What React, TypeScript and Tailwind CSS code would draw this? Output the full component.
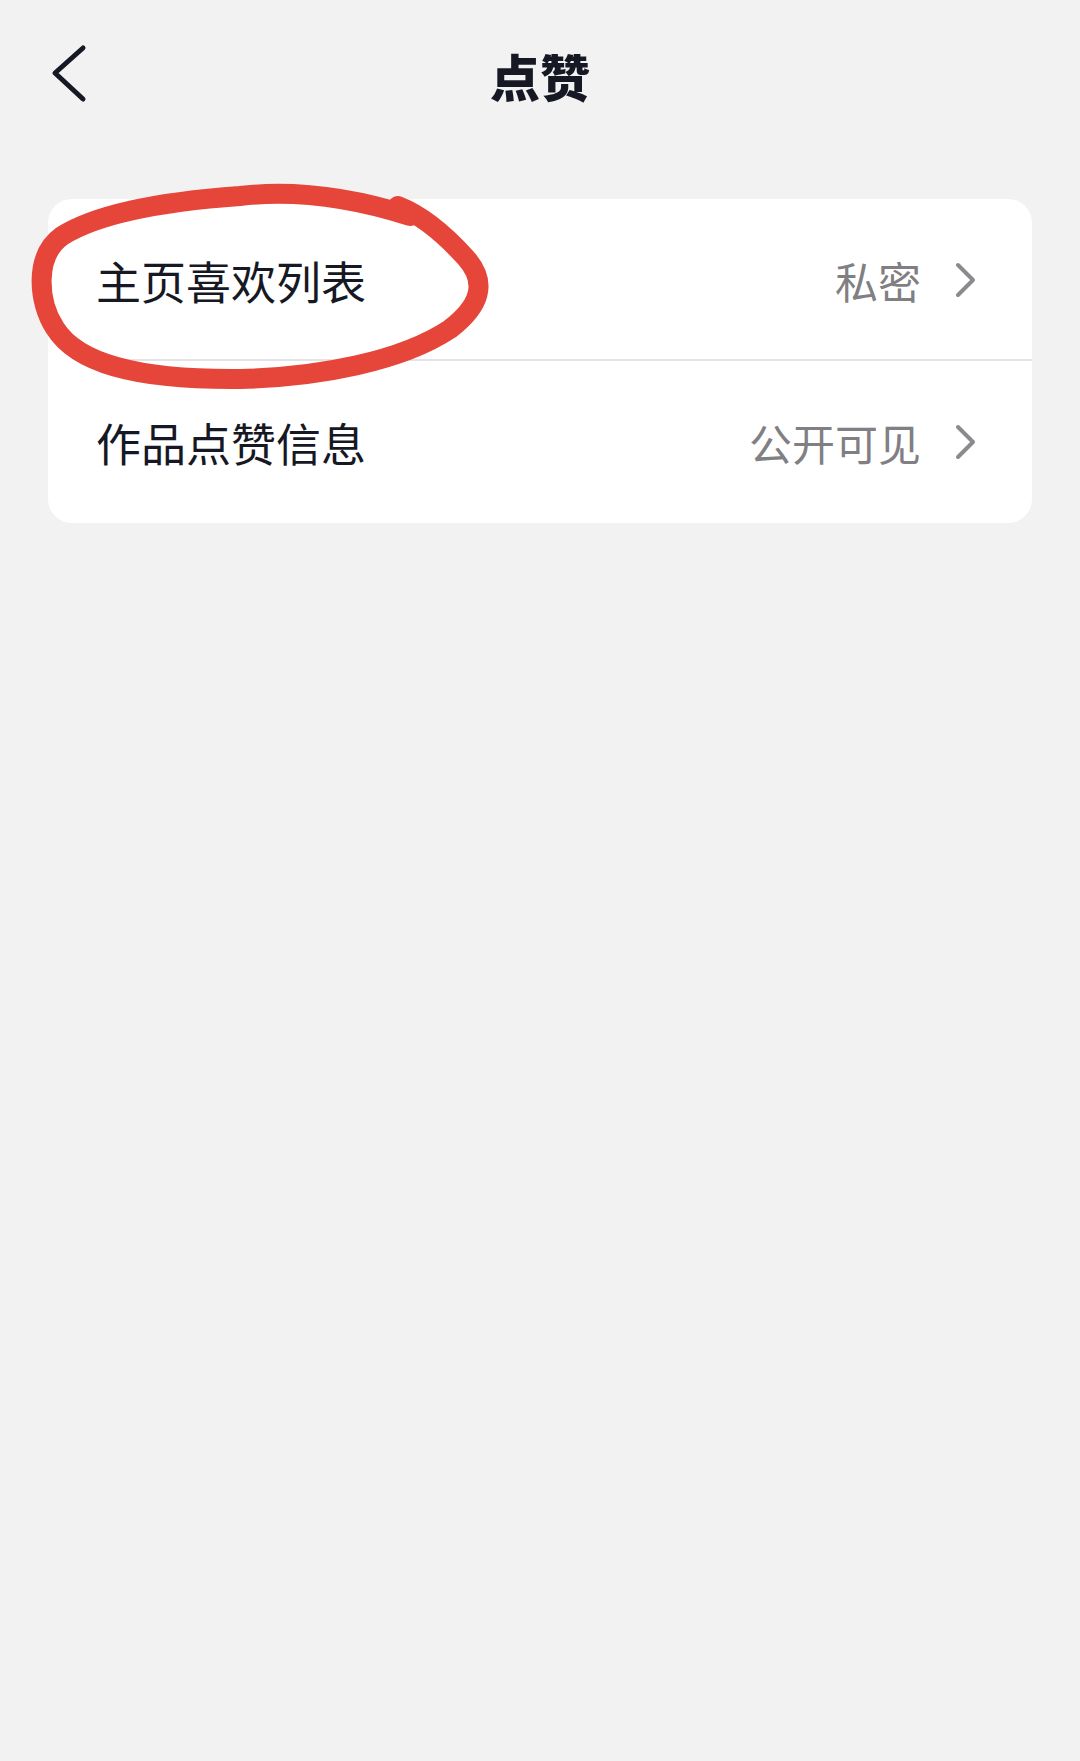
const cjk = { fontFamily: '"Noto Sans CJK SC", "Noto Sans", sans-serif' }

const Chevron = () => (
    <svg width="22" height="36" viewBox="0 0 22 36" className="shrink-0">
        <polyline points="3,3 18,18 3,33" fill="none" stroke="#8a8a8f" strokeWidth="4" strokeLinecap="round" strokeLinejoin="round" />
    </svg>
)

const Row = ({ label, value, divider }: { label: string; value: string; divider?: boolean }) => (
    <div className="relative flex h-[162px] items-center justify-between pl-12 pr-[55px]">
        <span className="text-[45px] leading-none text-[#161823]">{label}</span>
        <div className="flex items-center gap-[34px]">
            <span className="text-[43px] leading-none text-[#7f7f84]">{value}</span>
            <Chevron />
        </div>
        {divider && <div className="absolute bottom-0 left-12 right-0 h-[2px] bg-[#e3e3e5]" />}
    </div>
)

export default function App() {
    return (
        <div className="relative min-h-[1761px] w-[1080px] bg-[#f2f2f2]" style={cjk}>
            {/* Header */}
            <div className="relative flex h-[150px] items-center justify-center">
                <svg width="40" height="64" viewBox="0 0 40 64" className="absolute left-[48px] top-[42px]">
                    <polyline points="35,6 7,31 35,57" fill="none" stroke="#161823" strokeWidth="5" strokeLinecap="round" strokeLinejoin="round" />
                </svg>
                <h1 className="text-[50px] font-black leading-none text-[#161823]">点赞</h1>
            </div>

            {/* Settings card */}
            <div className="mx-12 mt-[49px] overflow-hidden rounded-[24px] bg-white">
                <Row label="主页喜欢列表" value="私密" divider />
                <Row label="作品点赞信息" value="公开可见" />
            </div>

            {/* Hand-drawn annotation */}
            <svg width="1080" height="520" viewBox="0 0 1080 520" className="pointer-events-none absolute left-0 top-0">
                <path
                    d="M 410 216 C 350 197, 292 190, 240 196 C 170 201, 100 212, 62 236 C 34 256, 38 302, 55 328 C 76 362, 132 380, 240 379 C 320 377, 402 361, 450 329 C 480 306, 488 283, 466 258 C 448 238, 424 216, 398 206"
                    fill="none"
                    stroke="#e6463a"
                    strokeWidth="20"
                    strokeLinecap="round"
                    strokeLinejoin="round"
                />
            </svg>
        </div>
    )
}
